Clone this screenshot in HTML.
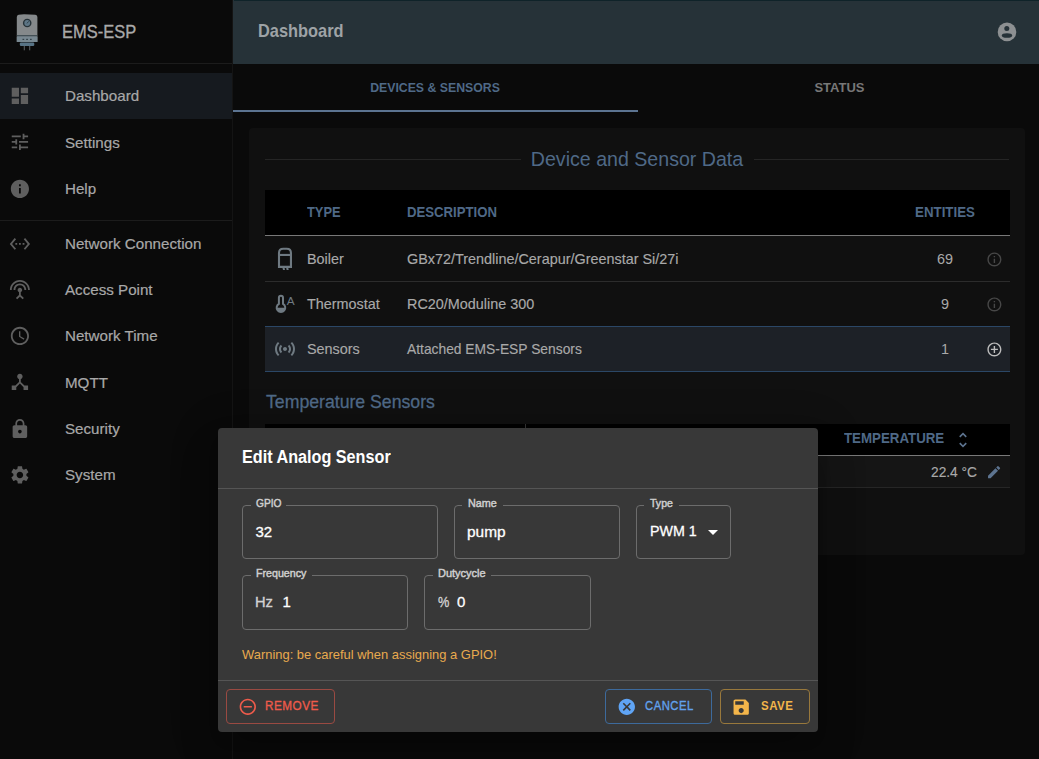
<!DOCTYPE html>
<html><head><meta charset="utf-8">
<style>
*{box-sizing:border-box;margin:0;padding:0}
html,body{width:1039px;height:759px;overflow:hidden;background:#0a0a0a;font-family:"Liberation Sans",sans-serif}
.t{position:absolute;line-height:1;white-space:nowrap}
.r{position:absolute}
</style></head><body>
<div class="r" style="left:0px;top:0px;width:232px;height:759px;background:#0a0a0a;"></div>
<div class="r" style="left:232px;top:0px;width:1px;height:759px;background:#141414;"></div>
<svg class="r" style="left:16px;top:14px" width="23" height="37" viewBox="0 0 23 37">
<path d="M0.8 3 Q0.8 0.9 2.6 0.7 L8 0.3 L19.4 0.8 Q21.4 1 21.4 3 V28 H0.8 Z" fill="#85898b"/>
<rect x="0.8" y="21.2" width="20.6" height="1.3" fill="#34424a"/>
<rect x="0.8" y="22.5" width="20.6" height="5.5" rx="0.6" fill="#788891"/>
<rect x="6.5" y="24.8" width="1.7" height="1.2" fill="#34424a"/><rect x="10.2" y="24.8" width="1.7" height="1.2" fill="#34424a"/><rect x="14" y="24.8" width="1.7" height="1.2" fill="#34424a"/>
<circle cx="11.2" cy="9" r="4.3" fill="#263238"/>
<circle cx="11.2" cy="9" r="2.9" fill="#5d7686"/>
<path d="M11 9.4 L12.6 7.4" stroke="#263238" stroke-width="0.8"/>
<rect x="3.8" y="28.6" width="14.5" height="3.4" rx="1.2" fill="#587486"/>
<rect x="7.7" y="32" width="1.3" height="4.3" fill="#4b4f52"/>
<rect x="13" y="32" width="1.3" height="4.3" fill="#4b4f52"/>
</svg>
<div class="t" style="left:61.6px;top:22.96px;font-size:18px;color:#a9a9a9;font-weight:400;transform:scaleX(0.915);transform-origin:0 0;-webkit-text-stroke:0.35px #a9a9a9">EMS-ESP</div>
<div class="r" style="left:0px;top:63px;width:232px;height:1px;background:#1c1c1c;"></div>
<div class="r" style="left:0px;top:73px;width:232px;height:46px;background:#161a1f;"></div>
<svg class="r" style="left:9.2px;top:85.1px" width="21.8" height="21.8" viewBox="0 0 24 24"><path fill="#5f5f5f" d="M3 13h8V3H3v10zm0 8h8v-6H3v6zm10 0h8V11h-8v10zm0-18v6h8V3h-8z"/></svg>
<div class="t" style="left:65px;top:88.30px;font-size:15px;color:#a8a8a8;font-weight:400;transform:scaleX(1.01);transform-origin:0 0;-webkit-text-stroke:0.2px #a8a8a8">Dashboard</div>
<svg class="r" style="left:9.2px;top:131.29999999999998px" width="21.8" height="21.8" viewBox="0 0 24 24"><path fill="#5f5f5f" d="M3 17v2h6v-2H3zM3 5v2h10V5H3zm10 16v-2h8v-2h-8v-2h-2v6h2zM7 9v2H3v2h4v2h2V9H7zm14 4v-2H11v2h10zm-6-4h2V7h4V5h-4V3h-2v6z"/></svg>
<div class="t" style="left:65px;top:134.50px;font-size:15px;color:#a8a8a8;font-weight:400;transform:scaleX(1.01);transform-origin:0 0;-webkit-text-stroke:0.2px #a8a8a8">Settings</div>
<svg class="r" style="left:9.2px;top:177.5px" width="21.8" height="21.8" viewBox="0 0 24 24"><path fill="#5f5f5f" d="M12 2C6.48 2 2 6.48 2 12s4.48 10 10 10 10-4.48 10-10S17.52 2 12 2zm1 15h-2v-6h2v6zm0-8h-2V7h2v2z"/></svg>
<div class="t" style="left:65px;top:180.70px;font-size:15px;color:#a8a8a8;font-weight:400;transform:scaleX(1.01);transform-origin:0 0;-webkit-text-stroke:0.2px #a8a8a8">Help</div>
<svg class="r" style="left:9.2px;top:232.79999999999998px" width="21.8" height="21.8" viewBox="0 0 24 24"><path fill="#5f5f5f" d="M7.77 6.76 6.23 5.48.82 12l5.41 6.52 1.54-1.28L3.42 12l4.35-5.24zM7 13h2v-2H7v2zm10-2h-2v2h2v-2zm-6 2h2v-2h-2v2zm6.77-7.52-1.54 1.28L20.58 12l-4.35 5.24 1.54 1.28L23.18 12l-5.41-6.52z"/></svg>
<div class="t" style="left:65px;top:236.00px;font-size:15px;color:#a8a8a8;font-weight:400;transform:scaleX(1.01);transform-origin:0 0;-webkit-text-stroke:0.2px #a8a8a8">Network Connection</div>
<svg class="r" style="left:9.2px;top:279.0px" width="21.8" height="21.8" viewBox="0 0 24 24"><path fill="#5f5f5f" d="M12 5c-3.87 0-7 3.13-7 7h2c0-2.76 2.24-5 5-5s5 2.24 5 5h2c0-3.87-3.13-7-7-7zm1 9.29c.88-.39 1.5-1.26 1.5-2.29 0-1.38-1.12-2.5-2.5-2.5S9.5 10.62 9.5 12c0 1.02.62 1.9 1.5 2.29v3.3L7.59 21 9 22.41l3-3 3 3L16.41 21 13 17.59v-3.3zM12 1C5.93 1 1 5.93 1 12h2c0-4.97 4.03-9 9-9s9 4.03 9 9h2c0-6.07-4.93-11-11-11z"/></svg>
<div class="t" style="left:65px;top:282.20px;font-size:15px;color:#a8a8a8;font-weight:400;transform:scaleX(1.01);transform-origin:0 0;-webkit-text-stroke:0.2px #a8a8a8">Access Point</div>
<svg class="r" style="left:9.2px;top:325.1px" width="21.8" height="21.8" viewBox="0 0 24 24"><path fill="#5f5f5f" d="M11.99 2C6.47 2 2 6.48 2 12s4.47 10 9.99 10C17.52 22 22 17.52 22 12S17.52 2 11.99 2zM12 20c-4.42 0-8-3.58-8-8s3.58-8 8-8 8 3.58 8 8-3.58 8-8 8zm.5-13H11v6l5.25 3.15.75-1.23-4.5-2.67z"/></svg>
<div class="t" style="left:65px;top:328.30px;font-size:15px;color:#a8a8a8;font-weight:400;transform:scaleX(1.01);transform-origin:0 0;-webkit-text-stroke:0.2px #a8a8a8">Network Time</div>
<svg class="r" style="left:9.2px;top:371.40000000000003px" width="21.8" height="21.8" viewBox="0 0 24 24"><path fill="#5f5f5f" d="M17 16l-4-4V8.82C14.16 8.4 15 7.3 15 6c0-1.66-1.34-3-3-3S9 4.34 9 6c0 1.3.84 2.4 2 2.82V12l-4 4H3v5h5v-3.05l4-4.2 4 4.2V21h5v-5h-4z"/></svg>
<div class="t" style="left:65px;top:374.60px;font-size:15px;color:#a8a8a8;font-weight:400;transform:scaleX(1.01);transform-origin:0 0;-webkit-text-stroke:0.2px #a8a8a8">MQTT</div>
<svg class="r" style="left:9.2px;top:417.6px" width="21.8" height="21.8" viewBox="0 0 24 24"><path fill="#5f5f5f" d="M18 8h-1V6c0-2.76-2.24-5-5-5S7 3.24 7 6v2H6c-1.1 0-2 .9-2 2v10c0 1.1.9 2 2 2h12c1.1 0 2-.9 2-2V10c0-1.1-.9-2-2-2zm-6 9c-1.1 0-2-.9-2-2s.9-2 2-2 2 .9 2 2-.9 2-2 2zm3.1-9H8.9V6c0-1.71 1.39-3.1 3.1-3.1 1.71 0 3.1 1.39 3.1 3.1v2z"/></svg>
<div class="t" style="left:65px;top:420.80px;font-size:15px;color:#a8a8a8;font-weight:400;transform:scaleX(1.01);transform-origin:0 0;-webkit-text-stroke:0.2px #a8a8a8">Security</div>
<svg class="r" style="left:9.2px;top:463.8px" width="21.8" height="21.8" viewBox="0 0 24 24"><path fill="#5f5f5f" d="M19.14 12.94c.04-.3.06-.61.06-.94 0-.32-.02-.64-.07-.94l2.03-1.58c.18-.14.23-.41.12-.61l-1.92-3.32c-.12-.22-.37-.29-.59-.22l-2.39.96c-.5-.38-1.03-.7-1.62-.94l-.36-2.54c-.04-.24-.24-.41-.48-.41h-3.84c-.24 0-.43.17-.47.41l-.36 2.54c-.59.24-1.13.57-1.62.94l-2.39-.96c-.22-.08-.47 0-.59.22L2.74 8.87c-.12.21-.08.47.12.61l2.03 1.58c-.05.3-.09.63-.09.94s.02.64.07.94l-2.03 1.58c-.18.14-.23.41-.12.61l1.92 3.32c.12.22.37.29.59.22l2.39-.96c.5.38 1.03.7 1.62.94l.36 2.54c.05.24.24.41.48.41h3.84c.24 0 .44-.17.47-.41l.36-2.54c.59-.24 1.13-.56 1.62-.94l2.39.96c.22.08.47 0 .59-.22l1.92-3.32c.12-.22.07-.47-.12-.61l-2.01-1.58zM12 15.6c-1.98 0-3.6-1.62-3.6-3.6s1.62-3.6 3.6-3.6 3.6 1.62 3.6 3.6-1.62 3.6-3.6 3.6z"/></svg>
<div class="t" style="left:65px;top:467.00px;font-size:15px;color:#a8a8a8;font-weight:400;transform:scaleX(1.01);transform-origin:0 0;-webkit-text-stroke:0.2px #a8a8a8">System</div>
<div class="r" style="left:0px;top:220px;width:232px;height:1px;background:#1c1c1c;"></div>
<div class="r" style="left:233px;top:0px;width:806px;height:64px;background:#263238;"></div>
<div class="r" style="left:234px;top:0px;width:805px;height:1px;background:#0f2329;"></div>
<div class="t" style="left:257.5px;top:22.24px;font-size:18.5px;color:#9ea3a6;font-weight:700;transform:scaleX(0.885);transform-origin:0 0;">Dashboard</div>
<svg class="r" style="left:985px;top:12px" width="40" height="40" viewBox="985 12 40 40"><circle cx="1007" cy="31.9" r="9.3" fill="#8d9092"/><circle cx="1006.8" cy="28.4" r="2.5" fill="#263238"/><ellipse cx="1007" cy="35.5" rx="5.2" ry="2.3" fill="#263238"/></svg>
<div class="t" style="left:235.0px;width:400px;text-align:center;top:81.00px;font-size:13px;color:#4f6987;font-weight:700;transform:scaleX(0.945);">DEVICES &amp; SENSORS</div>
<div class="t" style="left:639.5px;width:400px;text-align:center;top:80.90px;font-size:13px;color:#777777;font-weight:700;">STATUS</div>
<div class="r" style="left:233px;top:110px;width:405px;height:2px;background:#5c7491;"></div>
<div class="r" style="left:249px;top:128px;width:776px;height:427px;background:#101010;border-radius:4px"></div>
<div class="r" style="left:265px;top:159px;width:256px;height:1px;background:#252525;"></div>
<div class="r" style="left:754px;top:159px;width:255px;height:1px;background:#252525;"></div>
<div class="t" style="left:437.4px;width:400px;text-align:center;top:149.92px;font-size:19.7px;color:#4f6987;font-weight:400;transform:scaleX(0.995);">Device and Sensor Data</div>
<div class="r" style="left:265px;top:190px;width:745px;height:45px;background:#000;"></div>
<div class="r" style="left:265px;top:235px;width:745px;height:1px;background:#787878;"></div>
<div class="t" style="left:307.3px;top:205.15px;font-size:14px;color:#4f6987;font-weight:700;transform:scaleX(0.92);transform-origin:0 0;">TYPE</div>
<div class="t" style="left:407.1px;top:205.15px;font-size:14px;color:#4f6987;font-weight:700;transform:scaleX(0.94);transform-origin:0 0;">DESCRIPTION</div>
<div class="t" style="left:895.0px;width:100px;text-align:center;top:205.15px;font-size:14px;color:#4f6987;font-weight:700;transform:scaleX(0.95);">ENTITIES</div>
<div class="r" style="left:265px;top:281px;width:745px;height:1px;background:#2c2c2c;"></div>
<div class="r" style="left:265px;top:326px;width:745px;height:46px;background:#1d2127;border-top:1px solid #2b4766;border-bottom:1px solid #2b4766"></div>
<div class="t" style="left:307px;top:252.11px;font-size:14.4px;color:#a9a9a9;font-weight:400;-webkit-text-stroke:0.15px #a9a9a9">Boiler</div>
<div class="t" style="left:407px;top:252.11px;font-size:14.4px;color:#a9a9a9;font-weight:400;-webkit-text-stroke:0.15px #a9a9a9">GBx72/Trendline/Cerapur/Greenstar Si/27i</div>
<div class="t" style="left:915.0px;width:60px;text-align:center;top:252.11px;font-size:14.4px;color:#a9a9a9;font-weight:400;">69</div>
<svg class="r" style="left:985.6px;top:250.9px" width="16.8" height="16.8" viewBox="0 0 24 24"><path fill="#474747" d="M11 7h2v2h-2zm0 4h2v6h-2zm1-9C6.48 2 2 6.48 2 12s4.48 10 10 10 10-4.48 10-10S17.52 2 12 2zm0 18c-4.41 0-8-3.59-8-8s3.59-8 8-8 8 3.59 8 8-3.59 8-8 8z"/></svg>
<div class="t" style="left:307px;top:297.31px;font-size:14.4px;color:#a9a9a9;font-weight:400;-webkit-text-stroke:0.15px #a9a9a9">Thermostat</div>
<div class="t" style="left:407px;top:297.31px;font-size:14.4px;color:#a9a9a9;font-weight:400;-webkit-text-stroke:0.15px #a9a9a9">RC20/Moduline 300</div>
<div class="t" style="left:915.0px;width:60px;text-align:center;top:297.31px;font-size:14.4px;color:#a9a9a9;font-weight:400;">9</div>
<svg class="r" style="left:985.6px;top:296.1px" width="16.8" height="16.8" viewBox="0 0 24 24"><path fill="#474747" d="M11 7h2v2h-2zm0 4h2v6h-2zm1-9C6.48 2 2 6.48 2 12s4.48 10 10 10 10-4.48 10-10S17.52 2 12 2zm0 18c-4.41 0-8-3.59-8-8s3.59-8 8-8 8 3.59 8 8-3.59 8-8 8z"/></svg>
<div class="t" style="left:307px;top:342.31px;font-size:14.4px;color:#a9a9a9;font-weight:400;-webkit-text-stroke:0.15px #a9a9a9">Sensors</div>
<div class="t" style="left:407px;top:342.31px;font-size:14.4px;color:#a9a9a9;font-weight:400;-webkit-text-stroke:0.15px #a9a9a9"><span style="display:inline-block;transform:scaleX(0.96);transform-origin:0 0">Attached EMS-ESP Sensors</span></div>
<div class="t" style="left:915.0px;width:60px;text-align:center;top:342.31px;font-size:14.4px;color:#a9a9a9;font-weight:400;">1</div>
<svg class="r" style="left:985.6px;top:341.1px" width="16.8" height="16.8" viewBox="0 0 24 24"><path fill="#bdbdbd" d="M13 7h-2v4H7v2h4v4h2v-4h4v-2h-4V7zm-1-5C6.48 2 2 6.48 2 12s4.48 10 10 10 10-4.48 10-10S17.52 2 12 2zm0 18c-4.41 0-8-3.59-8-8s3.59-8 8-8 8 3.59 8 8-3.59 8-8 8z"/></svg>
<svg class="r" style="left:272px;top:244px" width="28" height="30" viewBox="0 0 28 30">
<path d="M7 22.85 V9 Q7 4.8 11.2 4.8 H14.75 Q18.95 4.8 18.95 9 V22.85 Z" fill="none" stroke="#6f7a82" stroke-width="2.1"/>
<line x1="7" y1="10.95" x2="18.95" y2="10.95" stroke="#6f7a82" stroke-width="2.1"/>
<path d="M10.5 23.9 H12.6 L13 26 H11 Z M14.2 23.9 H16.3 L16.7 26 H14.6 Z" fill="#6f7a82"/>
</svg>
<svg class="r" style="left:272px;top:290px" width="28" height="28" viewBox="0 0 28 28">
<path d="M6.9 13.92 V7.85 A2.05 2.05 0 0 1 11 7.85 V13.92 A4.3 4.3 0 1 1 6.9 13.92 Z" fill="none" stroke="#6f7a82" stroke-width="2"/>
<path d="M4.65 17.7 A4.3 4.3 0 0 0 13.25 17.7 Z" fill="#6f7a82"/>
<text x="14.7" y="15.1" font-family="Liberation Sans" font-size="11.8" fill="#6f7a82">A</text>
</svg>
<svg class="r" style="left:273px;top:337px" width="24" height="24" viewBox="0 0 24 24"><path fill="#6f7a82" d="M7.76 16.24C6.67 15.16 6 13.66 6 12s.67-3.16 1.76-4.24l1.42 1.42C8.45 9.9 8 10.9 8 12c0 1.1.45 2.1 1.17 2.83l-1.41 1.41zm8.48 0C17.33 15.16 18 13.66 18 12s-.67-3.16-1.76-4.24l-1.42 1.42C15.55 9.9 16 10.9 16 12c0 1.1-.45 2.1-1.17 2.83l1.41 1.41zM12 10c-1.1 0-2 .9-2 2s.9 2 2 2 2-.9 2-2-.9-2-2-2zm8 2c0 2.21-.9 4.21-2.35 5.65l1.42 1.42C20.88 17.26 22 14.76 22 12s-1.12-5.26-2.93-7.07l-1.42 1.42C19.1 7.79 20 9.79 20 12zM6.35 6.35 4.93 4.93C3.12 6.74 2 9.24 2 12s1.12 5.26 2.93 7.07l1.42-1.42C4.9 16.21 4 14.21 4 12s.9-4.21 2.35-5.65z"/></svg>
<div class="t" style="left:265.6px;top:392.64px;font-size:18.5px;color:#4f6987;font-weight:400;transform:scaleX(0.955);transform-origin:0 0;-webkit-text-stroke:0.3px #4f6987">Temperature Sensors</div>
<div class="r" style="left:265px;top:424px;width:745px;height:31px;background:#000;"></div>
<div class="r" style="left:525px;top:424px;width:1px;height:30px;background:#333333;"></div>
<div class="r" style="left:265px;top:455px;width:745px;height:1px;background:#787878;"></div>
<div class="r" style="left:265px;top:456px;width:745px;height:31px;background:#151515;"></div>
<div class="r" style="left:265px;top:487px;width:745px;height:1px;background:#262626;"></div>
<div class="t" style="left:843.8px;top:431.45px;font-size:14px;color:#4f6987;font-weight:700;transform:scaleX(0.95);transform-origin:0 0;">TEMPERATURE</div>
<svg class="r" style="left:953px;top:430px" width="20" height="20" viewBox="0 0 24 24"><path fill="#5d7490" d="M12 5.83 15.17 9l1.41-1.41L12 3 7.41 7.59 8.83 9 12 5.83zm0 12.34L8.83 15l-1.41 1.41L12 21l4.59-4.59L15.17 15 12 18.17z"/></svg>
<div class="t" style="left:931px;top:465.21px;font-size:14.4px;color:#a9a9a9;font-weight:400;transform:scaleX(0.955);transform-origin:0 0;-webkit-text-stroke:0.15px #a9a9a9">22.4 °C</div>
<svg class="r" style="left:985.8px;top:464.3px" width="16.2" height="16.2" viewBox="0 0 24 24"><path fill="#5d7490" d="M3 17.25V21h3.75L17.81 9.94l-3.75-3.75L3 17.25zM20.71 7.04c.39-.39.39-1.02 0-1.41l-2.34-2.34a.9959.9959 0 0 0-1.41 0l-1.83 1.83 3.75 3.75 1.83-1.83z"/></svg>
<div class="r" style="left:218px;top:428px;width:600px;height:304px;background:#383838;border-radius:4px;box-shadow:0 11px 15px -7px rgba(0,0,0,.2),0 24px 38px 3px rgba(0,0,0,.14),0 9px 46px 8px rgba(0,0,0,.12)"></div>
<div class="t" style="left:242px;top:449.19px;font-size:17.5px;color:#ffffff;font-weight:700;transform:scaleX(0.925);transform-origin:0 0;">Edit Analog Sensor</div>
<div class="r" style="left:218px;top:488px;width:600px;height:1px;background:#555555;"></div>
<div class="r" style="left:242px;top:505px;width:196px;height:54px;background:transparent;border:1px solid #6c6c6c;border-radius:4px"></div>
<div class="r" style="left:250.6px;top:504px;width:35.6px;height:3px;background:#383838;"></div>
<div class="t" style="left:256px;top:498.09px;font-size:11px;color:#cfcfcf;font-weight:400;transform:scaleX(0.93);transform-origin:0 0;-webkit-text-stroke:0.45px #cfcfcf">GPIO</div>
<div class="t" style="left:255.5px;top:523.50px;font-size:15px;color:#ffffff;font-weight:400;-webkit-text-stroke:0.3px #fff">32</div>
<div class="r" style="left:454px;top:505px;width:166px;height:54px;background:transparent;border:1px solid #6c6c6c;border-radius:4px"></div>
<div class="r" style="left:462px;top:504px;width:41px;height:3px;background:#383838;"></div>
<div class="t" style="left:468px;top:498.09px;font-size:11px;color:#cfcfcf;font-weight:400;transform:scaleX(0.98);transform-origin:0 0;-webkit-text-stroke:0.45px #cfcfcf">Name</div>
<div class="t" style="left:467.3px;top:523.50px;font-size:15px;color:#ffffff;font-weight:400;transform:scaleX(1.03);transform-origin:0 0;-webkit-text-stroke:0.3px #fff">pump</div>
<div class="r" style="left:636px;top:505px;width:95px;height:54px;background:transparent;border:1px solid #6c6c6c;border-radius:4px"></div>
<div class="r" style="left:644px;top:504px;width:35px;height:3px;background:#383838;"></div>
<div class="t" style="left:650px;top:498.09px;font-size:11px;color:#cfcfcf;font-weight:400;transform:scaleX(0.96);transform-origin:0 0;-webkit-text-stroke:0.45px #cfcfcf">Type</div>
<div class="t" style="left:650.2px;top:523.30px;font-size:15px;color:#ffffff;font-weight:400;transform:scaleX(0.95);transform-origin:0 0;-webkit-text-stroke:0.3px #fff">PWM 1</div>
<svg class="r" style="left:707.5px;top:529.5px" width="10" height="5" viewBox="0 0 10 5"><path d="M0 0l5 5 5-5z" fill="#fff"/></svg>
<div class="r" style="left:242px;top:575px;width:166px;height:55px;background:transparent;border:1px solid #6c6c6c;border-radius:4px"></div>
<div class="r" style="left:250.6px;top:574px;width:61px;height:3px;background:#383838;"></div>
<div class="t" style="left:256px;top:568.09px;font-size:11px;color:#cfcfcf;font-weight:400;transform:scaleX(0.97);transform-origin:0 0;-webkit-text-stroke:0.45px #cfcfcf">Frequency</div>
<div class="t" style="left:255.4px;top:593.70px;font-size:15px;color:#d2d2d2;font-weight:400;transform:scaleX(0.98);transform-origin:0 0;-webkit-text-stroke:0.35px #d2d2d2">Hz</div>
<div class="t" style="left:282.4px;top:593.70px;font-size:15px;color:#ffffff;font-weight:400;-webkit-text-stroke:0.3px #fff">1</div>
<div class="r" style="left:424px;top:575px;width:167px;height:55px;background:transparent;border:1px solid #6c6c6c;border-radius:4px"></div>
<div class="r" style="left:432.5px;top:574px;width:58px;height:3px;background:#383838;"></div>
<div class="t" style="left:438px;top:568.09px;font-size:11px;color:#cfcfcf;font-weight:400;-webkit-text-stroke:0.45px #cfcfcf">Dutycycle</div>
<div class="t" style="left:438px;top:593.70px;font-size:15px;color:#d2d2d2;font-weight:400;transform:scaleX(0.85);transform-origin:0 0;-webkit-text-stroke:0.35px #d2d2d2">%</div>
<div class="t" style="left:457px;top:593.70px;font-size:15px;color:#ffffff;font-weight:400;-webkit-text-stroke:0.3px #fff">0</div>
<div class="t" style="left:242px;top:648.30px;font-size:13px;color:#e8aa4e;font-weight:400;transform:scaleX(0.995);transform-origin:0 0;">Warning: be careful when assigning a GPIO!</div>
<div class="r" style="left:218px;top:680px;width:600px;height:1px;background:#555555;"></div>
<div class="r" style="left:226px;top:689px;width:109px;height:35px;background:transparent;border:1px solid #9a4a42;border-radius:4px"></div>
<svg class="r" style="left:238.2px;top:696.7px" width="19.6" height="19.6" viewBox="0 0 24 24"><path fill="#ef5b4b" d="M7 11v2h10v-2H7zm5-9C6.48 2 2 6.48 2 12s4.48 10 10 10 10-4.48 10-10S17.52 2 12 2zm0 18c-4.41 0-8-3.59-8-8s3.59-8 8-8 8 3.59 8 8-3.59 8-8 8z"/></svg>
<div class="t" style="left:265.3px;top:699.92px;font-size:12.5px;color:#ef5b4b;font-weight:400;transform:scaleX(0.94);transform-origin:0 0;letter-spacing:0.5px;-webkit-text-stroke:0.3px #ef5b4b">REMOVE</div>
<div class="r" style="left:605px;top:689px;width:107px;height:35px;background:transparent;border:1px solid #3d6a9c;border-radius:4px"></div>
<svg class="r" style="left:617.2px;top:697.1px" width="19.6" height="19.6" viewBox="0 0 24 24"><path fill="#5fa4f5" d="M12 2C6.47 2 2 6.47 2 12s4.47 10 10 10 10-4.47 10-10S17.53 2 12 2zm5 13.59L15.59 17 12 13.41 8.41 17 7 15.59 10.59 12 7 8.41 8.41 7 12 10.59 15.59 7 17 8.41 13.41 12 17 15.59z"/></svg>
<div class="t" style="left:645px;top:699.92px;font-size:12.5px;color:#62a2ee;font-weight:400;transform:scaleX(0.9);transform-origin:0 0;letter-spacing:0.6px;-webkit-text-stroke:0.35px #62a2ee">CANCEL</div>
<div class="r" style="left:720px;top:689px;width:90px;height:35px;background:transparent;border:1px solid #98783c;border-radius:4px"></div>
<svg class="r" style="left:731.2px;top:696.5px" width="20.4" height="20.4" viewBox="0 0 24 24"><path fill="#f3b54a" d="M17 3H5c-1.11 0-2 .9-2 2v14c0 1.1.89 2 2 2h14c1.1 0 2-.9 2-2V7l-4-4zm-5 16c-1.66 0-3-1.34-3-3s1.34-3 3-3 3 1.34 3 3-1.34 3-3 3zm3-10H5V5h10v4z"/></svg>
<div class="t" style="left:760.5px;top:699.92px;font-size:12.5px;color:#f3b54a;font-weight:700;transform:scaleX(0.92);transform-origin:0 0;letter-spacing:0.5px">SAVE</div>
</body></html>
